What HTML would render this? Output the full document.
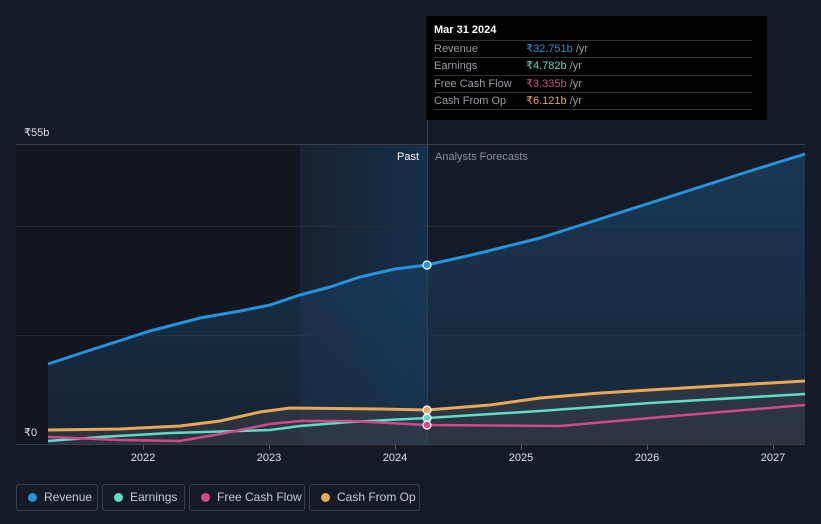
<!DOCTYPE html>
<html><head><meta charset="utf-8"><style>
body{margin:0;width:821px;height:524px;background:#151b26;font-family:"Liberation Sans","Noto Sans CJK SC",sans-serif;overflow:hidden;position:relative}
.lg{position:absolute;top:484px;height:27px;border:1px solid #3a3f48;border-radius:3px;box-sizing:border-box;color:#c8cbd0;font-size:12px;line-height:25px;padding-left:27px}
.lg i{position:absolute;left:11px;top:8px;width:9px;height:9px;border-radius:50%}
.tt{position:absolute;left:426px;top:16px;width:341px;height:104px;background:#000;color:#fff;font-size:11px}
.tt .r{position:absolute;left:8px;width:318px;border-top:1px solid #333;height:17px;line-height:17px;color:#9a9ea5}
.tt .r b{font-weight:normal;position:absolute;left:92px}
</style></head><body>
<svg width="821" height="524" style="position:absolute;left:0;top:0">
<defs>
<linearGradient id="hl" x1="0" x2="1"><stop offset="0" stop-color="#1a2a3d" stop-opacity="0.5"/><stop offset="1" stop-color="#13304a"/></linearGradient>
<linearGradient id="rv" x1="0" y1="0" x2="0" y2="1"><stop offset="0" stop-color="#1d4a70" stop-opacity="0.8"/><stop offset="1" stop-color="#1a3550" stop-opacity="0.6"/></linearGradient>
</defs>
<rect x="16" y="145" width="284" height="300" fill="#12161e"/>
<rect x="300" y="145" width="127" height="300" fill="url(#hl)"/>
<line x1="16" y1="144.5" x2="805" y2="144.5" stroke="#3b414b"/>
<line x1="16" y1="226.5" x2="805" y2="226.5" stroke="#272d37"/>
<line x1="16" y1="335.5" x2="805" y2="335.5" stroke="#272d37"/>
<line x1="427.5" y1="120" x2="427.5" y2="445" stroke="#2a4a6a"/>
<path d="M48,364 L100,347 150,331 200,318 240,311 270,305 300,295 330,287 360,277 395,269 427,265 480,253 540,238 600,219 650,203 700,187 750,171 805,154 L805,444 L48,444Z" fill="url(#rv)" opacity="0.75"/>
<path d="M48,430 L120,429 180,426 220,421 260,412 290,408 380,409 427,410 490,405 540,398 600,393 700,387 805,381 L805,444 48,444Z" fill="#3a3e48" opacity="0.6"/>
<path d="M48,364 L100,347 150,331 200,318 240,311 270,305 300,295 330,287 360,277 395,269 427,265 480,253 540,238 600,219 650,203 700,187 750,171 805,154" fill="none" stroke="#2394df" stroke-width="3"/>
<path d="M48,430 L120,429 180,426 220,421 260,412 290,408 380,409 427,410 490,405 540,398 600,393 700,387 805,381" fill="none" stroke="#e8a856" stroke-width="3"/>
<path d="M48,441 L100,437 170,433 270,430 300,426 350,422 427,418 540,411 650,403 805,394" fill="none" stroke="#5fdcc8" stroke-width="2.5"/>
<path d="M48,437 L120,440 180,441 220,434 270,424 300,421 350,421 427,425 560,426 650,418 805,405" fill="none" stroke="#d04a8a" stroke-width="2.5"/>
<line x1="16" y1="444.5" x2="805" y2="444.5" stroke="#3b414b"/>
<circle cx="427" cy="265" r="4" fill="#2394df" stroke="#fff" stroke-width="1.2"/>
<circle cx="427" cy="410" r="4" fill="#e8a856" stroke="#fff" stroke-width="1.2"/>
<circle cx="427" cy="418" r="4" fill="#5fdcc8" stroke="#fff" stroke-width="1.2"/>
<circle cx="427" cy="425" r="4" fill="#d04a8a" stroke="#fff" stroke-width="1.2"/>
<g stroke="#555" ><line x1="143.5" y1="445" x2="143.5" y2="450"/><line x1="269.5" y1="445" x2="269.5" y2="450"/><line x1="395.5" y1="445" x2="395.5" y2="450"/><line x1="521.5" y1="445" x2="521.5" y2="450"/><line x1="647.5" y1="445" x2="647.5" y2="450"/><line x1="773.5" y1="445" x2="773.5" y2="450"/></g>
<g fill="#e0e2e5" font-size="11" text-anchor="middle" font-family="Liberation Sans,sans-serif"><text x="143" y="461">2022</text><text x="269" y="461">2023</text><text x="395" y="461">2024</text><text x="521" y="461">2025</text><text x="647" y="461">2026</text><text x="773" y="461">2027</text></g>
<text x="24" y="136" fill="#e0e2e5" font-size="11" font-family="Liberation Sans,'Noto Sans CJK SC',sans-serif">₹55b</text>
<text x="24" y="436" fill="#e0e2e5" font-size="11" font-family="Liberation Sans,'Noto Sans CJK SC',sans-serif">₹0</text>
<text x="419" y="160" fill="#fff" font-size="11" text-anchor="end" font-family="Liberation Sans,sans-serif">Past</text>
<text x="435" y="160" fill="#8a8f97" font-size="11" font-family="Liberation Sans,sans-serif">Analysts Forecasts</text>
</svg>
<div class="tt">
<div style="position:absolute;left:8px;top:8px;font-weight:bold">Mar 31 2024</div>
<div class="r" style="top:24px">Revenue<b><span style="color:#2394df">₹32.751b</span> /yr</b></div>
<div class="r" style="top:41px">Earnings<b><span style="color:#5fdcc8">₹4.782b</span> /yr</b></div>
<div class="r" style="top:59px">Free Cash Flow<b><span style="color:#d04a8a">₹3.335b</span> /yr</b></div>
<div class="r" style="top:76px">Cash From Op<b><span style="color:#e8a856">₹6.121b</span> /yr</b></div>
<div class="r" style="top:93px;height:0"></div>
</div>
<div class="lg" style="left:16px;width:82px"><i style="background:#2394df"></i>Revenue</div>
<div class="lg" style="left:102px;width:83px"><i style="background:#5fdcc8"></i>Earnings</div>
<div class="lg" style="left:189px;width:116px"><i style="background:#d04a8a"></i>Free Cash Flow</div>
<div class="lg" style="left:309px;width:111px"><i style="background:#e8a856"></i>Cash From Op</div>
</body></html>
